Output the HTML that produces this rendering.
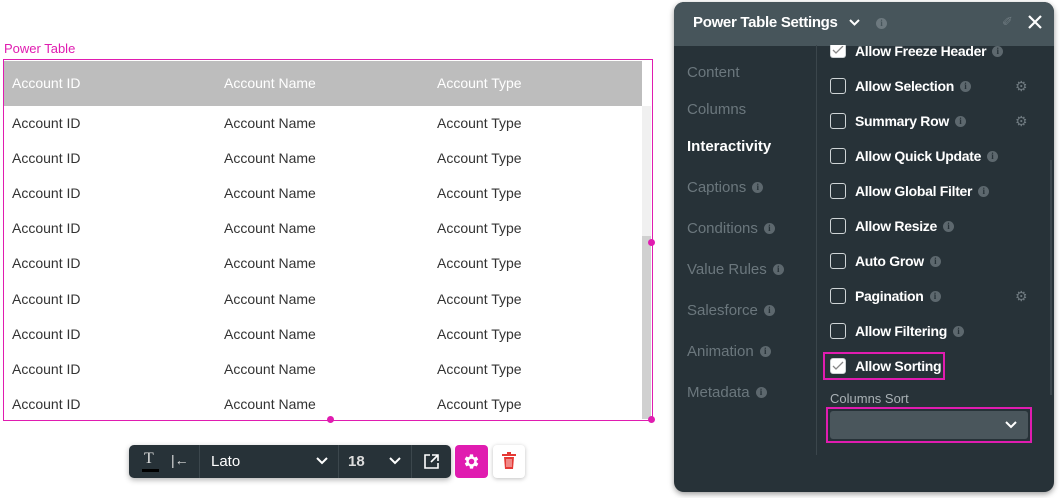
<!DOCTYPE html>
<html><head><style>
*{margin:0;padding:0;box-sizing:border-box}
body{width:1060px;height:498px;background:#fff;font-family:"Liberation Sans",sans-serif;position:relative;overflow:hidden}
.a{position:absolute}
.t{font-size:14px;color:#333}
.h{font-size:14px;color:#fff}
.nav{position:absolute;left:687px;font-size:15px;color:#6b777d}
.i{display:inline-block;width:11px;height:11px;border-radius:50%;background:#5d686e;color:#273238;font-size:9px;font-weight:bold;text-align:center;line-height:11px;vertical-align:2px;margin-left:6px;font-family:"Liberation Serif",serif;letter-spacing:0}
.cb{position:absolute;left:830px;width:16px;height:16px;border:1.5px solid #cfd4d6;border-radius:3px}
.cb.on{background:#fff}
.lb{position:absolute;left:855px;font-size:14px;font-weight:bold;color:#fff;letter-spacing:-0.3px}
.g{position:absolute;left:1015px;color:#6f7a80;font-size:14px}
</style></head><body>
<div class="a" style="left:4px;top:41px;font-size:13px;color:#e01cb0">Power Table</div>
<div class="a" style="left:3px;top:59px;width:650px;height:362px;border:1px solid #e01cb0"></div>
<div class="a" style="left:4px;top:61px;width:638px;height:45px;background:#bdbdbd"></div>
<div class="a" style="left:642px;top:106px;width:9px;height:130px;background:#f0f0f0"></div>
<div class="a" style="left:642px;top:236px;width:9px;height:183px;background:#d0d0d0"></div>
<div class="a" style="left:648px;top:239px;width:7px;height:7px;border-radius:50%;background:#e01cb0"></div>
<div class="a" style="left:648px;top:416px;width:7px;height:7px;border-radius:50%;background:#e01cb0"></div>
<div class="a" style="left:327px;top:416px;width:7px;height:7px;border-radius:50%;background:#e01cb0"></div>
<div class="a h" style="left:12px;top:75px">Account ID</div>
<div class="a h" style="left:224px;top:75px">Account Name</div>
<div class="a h" style="left:437px;top:75px">Account Type</div>
<div id="rows"></div>
<script>
var s='';for(var k=0;k<9;k++){var y=115+k*35.1;s+='<div class="a t" style="left:12px;top:'+y+'px">Account ID</div><div class="a t" style="left:224px;top:'+y+'px">Account Name</div><div class="a t" style="left:437px;top:'+y+'px">Account Type</div>';}
document.getElementById('rows').outerHTML=s;
</script>
<div class="a" style="left:129px;top:445px;width:322px;height:33px;background:#273238;border-radius:5px;box-shadow:0 2px 6px rgba(0,0,0,.3)"></div>
<div class="a" style="left:144px;top:450px;font-size:16px;color:#ddd;font-family:'Liberation Serif',serif">T</div>
<div class="a" style="left:142px;top:469px;width:17px;height:3px;background:#000"></div>
<div class="a" style="left:171px;top:452px;font-size:14px;color:#ddd">|←</div>
<div class="a" style="left:199px;top:445px;width:1px;height:33px;background:#3c474d"></div>
<div class="a" style="left:211px;top:453px;font-size:15px;color:#fff">Lato</div>
<svg class="a" style="left:316px;top:457px" width="12" height="8"><path d="M1 1l5 5 5-5" stroke="#fff" stroke-width="2" fill="none"/></svg>
<div class="a" style="left:338px;top:445px;width:1px;height:33px;background:#3c474d"></div>
<div class="a" style="left:348px;top:453px;font-size:15px;color:#ddd;font-weight:bold">18</div>
<svg class="a" style="left:389px;top:457px" width="12" height="8"><path d="M1 1l5 5 5-5" stroke="#fff" stroke-width="2" fill="none"/></svg>
<div class="a" style="left:411px;top:445px;width:1px;height:33px;background:#3c474d"></div>
<svg class="a" style="left:424px;top:454px" width="15" height="15"><path d="M6 1H1v13h13V9M8 1h6v6M14 1L7 8" stroke="#fff" stroke-width="1.6" fill="none"/></svg>
<div class="a" style="left:455px;top:445px;width:33px;height:33px;background:#e01cb0;border-radius:4px"></div>
<svg class="a" style="left:462px;top:452px" width="19" height="19" viewBox="0 0 24 24"><path fill="#fff" d="M19.4 13a7.5 7.5 0 000-2l2.1-1.6-2-3.5-2.5 1a7.6 7.6 0 00-1.7-1L15 3h-4l-.4 2.7a7.6 7.6 0 00-1.7 1l-2.5-1-2 3.5L6.6 11a7.5 7.5 0 000 2l-2.1 1.6 2 3.5 2.5-1a7.6 7.6 0 001.7 1L11 21h4l.4-2.7a7.6 7.6 0 001.7-1l2.5 1 2-3.5zM13 15.5a3.5 3.5 0 110-7 3.5 3.5 0 010 7z" transform="translate(-1 0)"/></svg>
<div class="a" style="left:493px;top:445px;width:32px;height:33px;background:#fff;border-radius:4px;box-shadow:0 1px 4px rgba(0,0,0,.25)"></div>
<svg class="a" style="left:502px;top:452px" width="14" height="18"><path d="M0 3h14M5 1h4" stroke="#e53935" stroke-width="2"/><path d="M2 5h10l-1 12H3z" fill="#e53935"/><path d="M5 7v8M7 7v8M9 7v8" stroke="#fff" stroke-width=".8"/></svg>
<div class="a" style="left:674px;top:2px;width:380px;height:490px;background:#273238;border-radius:10px;box-shadow:0 2px 6px rgba(0,0,0,.4);overflow:hidden">
<div style="height:44px;background:#47555b"></div></div>
<div class="a" style="left:693px;top:14px;font-size:15px;font-weight:bold;color:#fff;letter-spacing:-0.3px">Power Table Settings</div>
<svg class="a" style="left:849px;top:19px" width="11" height="8"><path d="M1 1l4.5 4.5L10 1" stroke="#fff" stroke-width="2" fill="none"/></svg>
<span class="a i" style="left:870px;top:18px;background:#6d797f;color:#47555b"> i</span>
<div class="a" style="left:1002px;top:14px;font-size:13px;color:#6f7b81">✐</div>
<svg class="a" style="left:1028px;top:15px" width="14" height="14"><path d="M1 1l12 12M13 1L1 13" stroke="#fff" stroke-width="2.2"/></svg>
<div class="a" style="left:816px;top:45px;width:1px;height:410px;background:#3b464c"></div>
<div class="a" style="left:1050px;top:160px;width:2px;height:235px;background:#3b464c"></div>
<div class="nav" style="top:64px">Content</div>
<div class="nav" style="top:101px">Columns</div>
<div class="nav" style="top:138px;color:#fff;font-weight:bold">Interactivity</div>
<div class="nav" style="top:179px">Captions<span class="i">i</span></div>
<div class="nav" style="top:220px">Conditions<span class="i">i</span></div>
<div class="nav" style="top:261px">Value Rules<span class="i">i</span></div>
<div class="nav" style="top:302px">Salesforce<span class="i">i</span></div>
<div class="nav" style="top:343px">Animation<span class="i">i</span></div>
<div class="nav" style="top:384px">Metadata<span class="i">i</span></div>
<div class="cb on" style="top:45px;height:13px;border-top:none;border-radius:0 0 3px 3px"></div>
<svg class="a" style="left:832px;top:46px" width="12" height="10"><path d="M1 4l3 3 7-7" stroke="#888" stroke-width="1.3" fill="none"/></svg>
<div class="lb" style="top:43px">Allow Freeze Header<span class="i">i</span></div>
<div class="cb" style="top:78px"></div><div class="lb" style="top:78px">Allow Selection<span class="i">i</span></div><div class="g" style="top:78px">⚙</div>
<div class="cb" style="top:113px"></div><div class="lb" style="top:113px">Summary Row<span class="i">i</span></div><div class="g" style="top:113px">⚙</div>
<div class="cb" style="top:148px"></div><div class="lb" style="top:148px">Allow Quick Update<span class="i">i</span></div>
<div class="cb" style="top:183px"></div><div class="lb" style="top:183px">Allow Global Filter<span class="i">i</span></div>
<div class="cb" style="top:218px"></div><div class="lb" style="top:218px">Allow Resize<span class="i">i</span></div>
<div class="cb" style="top:253px"></div><div class="lb" style="top:253px">Auto Grow<span class="i">i</span></div>
<div class="cb" style="top:288px"></div><div class="lb" style="top:288px">Pagination<span class="i">i</span></div><div class="g" style="top:288px">⚙</div>
<div class="cb" style="top:323px"></div><div class="lb" style="top:323px">Allow Filtering<span class="i">i</span></div>
<div class="a" style="left:823px;top:352px;width:122px;height:28px;border:2.5px solid #e01cb0"></div>
<div class="cb on" style="top:358px"></div>
<svg class="a" style="left:832px;top:361px" width="12" height="10"><path d="M1 5l3 3 7-7" stroke="#888" stroke-width="1.3" fill="none"/></svg>
<div class="lb" style="top:358px">Allow Sorting</div>
<div class="a" style="left:830px;top:391px;font-size:13px;color:#aab2b6">Columns Sort</div>
<div class="a" style="left:826px;top:407px;width:206px;height:36px;border:2.5px solid #e01cb0;background:#273238;padding:2px"><div style="background:#4a565c;height:100%;border-radius:3px"></div></div>
<svg class="a" style="left:1005px;top:421px" width="12" height="8"><path d="M1 1l5 5 5-5" stroke="#fff" stroke-width="2" fill="none"/></svg>
</body></html>
